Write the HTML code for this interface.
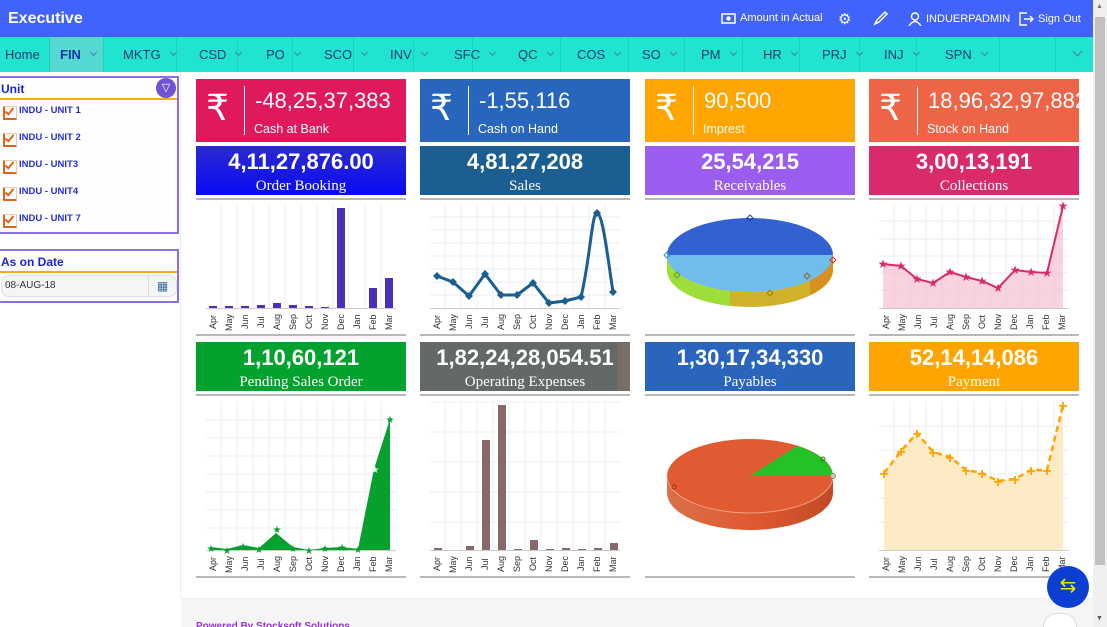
<!DOCTYPE html>
<html><head><meta charset="utf-8">
<style>
*{box-sizing:border-box;margin:0;padding:0}
html,body{width:1107px;height:627px;overflow:hidden}
body{font-family:"Liberation Sans",sans-serif;background:#fff;position:relative}
.hdr{position:absolute;left:0;top:0;width:1093px;height:37px;background:#4263fb;color:#fff}
.hdr .t{position:absolute;left:8px;top:10px;font-size:16px;font-weight:bold}
.hdr .r{position:absolute;top:12px;font-size:11px;display:flex;align-items:center;gap:4px}
.nav{position:absolute;left:0;top:37px;width:1093px;height:35px;background:#20e3d0}
.nav div{position:absolute;top:0;height:35px;line-height:35px;font-size:13px;color:#1d3b72;border-right:1px solid #1fd0c2;padding-left:10px;white-space:nowrap}
.nav i{display:inline-block;width:5px;height:5px;border-right:1px solid #4a7ab0;border-bottom:1px solid #4a7ab0;transform:rotate(45deg);margin-left:10px;vertical-align:4px}
.side{position:absolute;left:0;top:72px;width:181px;height:526px;border-right:1px solid #eee}
.box{position:absolute;left:0;width:179px;border:2px solid #8a6fe6;border-left:none;background:#fdfdfd}
.box .h{height:22px;border-bottom:2px solid #f7a81b;color:#1b25d8;font-weight:bold;font-size:12px;padding:4px 0 0 1px}
.it{height:27px;font-size:9.5px;font-weight:bold;color:#2530d8;padding-left:19px;position:relative;line-height:20px}
.it:before{content:"";position:absolute;left:3px;top:5px;width:11px;height:11px;border:1px solid #f2c9a8;border-left:2px solid #e0641c;border-bottom:2px solid #e0641c;border-radius:1px}
.it:after{content:"";position:absolute;left:7px;top:5px;width:3px;height:7px;border-right:2px solid #e0641c;border-bottom:2px solid #e0641c;transform:rotate(40deg)}
.card{position:absolute;width:210px;color:#fff}
.tc{height:63px;top:79px}
.tc .ic{position:absolute;left:10px;top:8px;font-size:36px}
.tc .ln{position:absolute;left:48px;top:7px;width:1px;height:49px;background:#fff}
.tc .n{position:absolute;left:59px;top:9px;font-size:22px}
.tc .l{position:absolute;left:58px;top:43px;font-size:12.5px}
.hc{height:49px;text-align:center}
.hc .n{font-size:22px;font-weight:bold;padding-top:3px;line-height:26px}
.hc .l{font-family:"Liberation Serif",serif;font-size:15px;line-height:22px}
.ch{position:absolute;width:210px;border-top:2px solid #b8b8b8;border-bottom:2px solid #b8b8b8}
.mo{position:absolute;left:9px;width:192px;display:flex;font-size:9px;color:#333}
.mo span{flex:1;writing-mode:vertical-rl;transform:rotate(180deg);text-align:right;display:flex;justify-content:center;align-items:center}
svg{position:absolute;left:0;top:0}
</style></head><body>
<div class="hdr"><div class="t">Executive</div>
<div class="r" style="left:721px"><svg style="position:static" width="15" height="11"><rect x="1" y="1" width="13" height="9" fill="none" stroke="#fff" stroke-width="1.5"/><circle cx="7.5" cy="5.5" r="2.2" fill="#fff"/></svg>Amount in Actual</div>
<div class="r" style="left:838px;top:10px;font-size:15px">⚙</div>
<div class="r" style="left:873px;top:10px"><svg style="position:static" width="16" height="16"><path d="M2 14 L4 10 L12 2 L14 4 L6 12 Z" fill="none" stroke="#fff" stroke-width="1.5"/></svg></div>
<div class="r" style="left:908px"><svg style="position:static" width="14" height="14"><circle cx="7" cy="4.5" r="3.5" fill="none" stroke="#fff" stroke-width="1.4"/><path d="M1 14 Q7 5 13 14" fill="none" stroke="#fff" stroke-width="1.4"/></svg>INDUERPADMIN</div>
<div class="r" style="left:1019px"><svg style="position:static" width="15" height="14"><path d="M8 1H1V13H8M5 7H14M11 4L14 7L11 10" fill="none" stroke="#fff" stroke-width="1.4"/></svg>Sign Out</div>
</div>
<div class="nav">
<div style="left:0;width:50px;padding-left:5px">Home</div>
<div style="left:50px;width:54px;background:#55d8d2;color:#1533a8;font-weight:bold">FIN<i></i></div>
<div style="left:104px;width:73px;padding-left:19px">MKTG<i></i></div>
<div style="left:177px;width:61px;padding-left:22px">CSD<i></i></div>
<div style="left:238px;width:55px;padding-left:28px">PO<i></i></div>
<div style="left:293px;width:61px;padding-left:31px">SCO<i></i></div>
<div style="left:354px;width:60px;padding-left:36px">INV<i></i></div>
<div style="left:414px;width:59px;padding-left:40px">SFC<i></i></div>
<div style="left:473px;width:88px;padding-left:45px">QC<i></i></div>
<div style="left:561px;width:68px;padding-left:16px">COS<i></i></div>
<div style="left:629px;width:56px;padding-left:13px">SO<i></i></div>
<div style="left:685px;width:58px;padding-left:16px">PM<i></i></div>
<div style="left:743px;width:57px;padding-left:20px">HR<i></i></div>
<div style="left:800px;width:60px;padding-left:22px">PRJ<i></i></div>
<div style="left:860px;width:57px;padding-left:24px">INJ<i></i></div>
<div style="left:917px;width:83px;padding-left:28px">SPN<i></i></div>
<div style="left:1000px;width:56px"></div>
<div style="left:1064px;border:none;padding:0"><i style="width:7px;height:7px"></i></div>
</div>
<div class="side">
<div class="box" style="top:4px;height:158px"><div class="h">Unit</div>
<div style="position:absolute;left:156px;top:0;width:20px;height:20px;border-radius:50%;background:#6f52d6;color:#fff;font-size:11px;text-align:center;line-height:20px">▽</div>
<div class="it" style="margin-top:1px">INDU - UNIT 1</div><div class="it">INDU - UNIT 2</div><div class="it">INDU - UNIT3</div><div class="it">INDU - UNIT4</div><div class="it">INDU - UNIT 7</div></div>
<div class="box" style="top:177px;height:54px"><div class="h">As on Date</div>
<div style="margin:2px 0 0 1px;height:22px;border:1px solid #ddd;border-radius:8px;background:#f5f5f5;font-size:10px;line-height:20px;padding-left:3px;color:#333;position:relative">08-AUG-18<div style="position:absolute;right:0;top:0;width:28px;height:20px;border-left:1px solid #ddd;color:#3a6aa0;text-align:center;font-size:12px">▦</div></div></div>
</div>

<div class="card tc" style="left:196px;background:#e0185e"><div class="ic">₹</div><div class="ln"></div><div class="n">-48,25,37,383</div><div class="l">Cash at Bank</div></div>
<div class="card tc" style="left:420px;background:#2865bd"><div class="ic">₹</div><div class="ln"></div><div class="n">-1,55,116</div><div class="l">Cash on Hand</div></div>
<div class="card tc" style="left:645px;background:#ffa500"><div class="ic">₹</div><div class="ln"></div><div class="n">90,500</div><div class="l">Imprest</div></div>
<div class="card tc" style="left:869px;background:#ee6446;overflow:hidden"><div class="ic">₹</div><div class="ln"></div><div class="n" style="white-space:nowrap">18,96,32,97,882</div><div class="l">Stock on Hand</div></div>

<div class="card hc" style="left:196px;top:146px;background:linear-gradient(#2a2ad0,#0a0af5)"><div class="n">4,11,27,876.00</div><div class="l">Order Booking</div></div>
<div class="card hc" style="left:420px;top:146px;background:#1b5e91"><div class="n">4,81,27,208</div><div class="l">Sales</div></div>
<div class="card hc" style="left:645px;top:146px;background:#9b5cf0"><div class="n">25,54,215</div><div class="l">Receivables</div></div>
<div class="card hc" style="left:869px;top:146px;background:#d92b6c"><div class="n">3,00,13,191</div><div class="l">Collections</div></div>

<div class="ch" style="left:196px;top:198px;height:138px"><svg width="210" height="134">
<g stroke="#e8ecf3"><path d="M25 4V108M41 4V108M57 4V108M73 4V108M89 4V108M105 4V108M121 4V108M137 4V108M153 4V108M169 4V108M185 4V108"/></g>
<path d="M10 108.5H200" stroke="#ccc"/>
<g fill="#4b30bb"><rect x="13" y="106" width="8" height="2"/><rect x="29" y="106" width="8" height="2"/><rect x="45" y="106" width="8" height="2"/><rect x="61" y="105" width="8" height="3"/><rect x="77" y="103" width="8" height="5"/><rect x="93" y="105" width="8" height="3"/><rect x="109" y="106" width="8" height="2"/><rect x="125" y="107" width="8" height="1"/><rect x="141" y="8" width="8" height="100"/><rect x="173" y="88" width="8" height="20"/><rect x="189" y="78" width="8" height="30"/></g></svg>
<div class="mo" style="top:110px;height:24px"><span>Apr</span><span>May</span><span>Jun</span><span>Jul</span><span>Aug</span><span>Sep</span><span>Oct</span><span>Nov</span><span>Dec</span><span>Jan</span><span>Feb</span><span>Mar</span></div></div>

<div class="ch" style="left:420px;top:198px;height:138px"><svg width="210" height="134">
<g stroke="#e8ecf3"><path d="M25 4V108M41 4V108M57 4V108M73 4V108M89 4V108M105 4V108M121 4V108M137 4V108M153 4V108M169 4V108M185 4V108M10 17H200M10 30H200M10 43H200M10 56H200M10 69H200M10 82H200M10 95H200"/></g>
<path d="M10 108.5H200" stroke="#ccc"/>
<path d="M17 76 L33 82 L49 96 L65 74 L81 95 L97 95 L113 83 L129 103 L145 101 L161 97 C170 60 172 12 177 13 C183 14 188 60 193 92" fill="none" stroke="#1b5e91" stroke-width="3"/>
<g fill="#1b5e91"><path d="M17 72l4 4-4 4-4-4zM33 78l4 4-4 4-4-4zM49 92l4 4-4 4-4-4zM65 70l4 4-4 4-4-4zM81 91l4 4-4 4-4-4zM97 91l4 4-4 4-4-4zM113 79l4 4-4 4-4-4zM129 99l4 4-4 4-4-4zM145 97l4 4-4 4-4-4zM161 93l4 4-4 4-4-4zM177 9l4 4-4 4-4-4zM193 88l4 4-4 4-4-4z"/></g></svg>
<div class="mo" style="top:110px;height:24px"><span>Apr</span><span>May</span><span>Jun</span><span>Jul</span><span>Aug</span><span>Sep</span><span>Oct</span><span>Nov</span><span>Dec</span><span>Jan</span><span>Feb</span><span>Mar</span></div></div>

<div class="ch" style="left:645px;top:198px;height:138px"><svg width="210" height="134">
<path d="M22 55 A83 37 0 0 0 188 55 L188 70 A83 37 0 0 1 22 70Z" fill="#cfb22a"/>
<path d="M22 55 L22 70 A83 37 0 0 0 85 106 L85 91 A83 37 0 0 1 22 55Z" fill="#9ede3a"/>
<path d="M165 80 L165 95 A83 37 0 0 0 188 70 L188 55 A83 37 0 0 1 165 80Z" fill="#d8901e"/>
<path d="M22 55 A83 37 0 0 1 188 55Z" fill="#3461d1"/>
<path d="M22 55 A83 37 0 0 0 188 55Z" fill="#70bcec"/>
<g fill="none" stroke-width="1"><path d="M105 15l3 3-3 3-3-3z" stroke="#1d40a0"/><path d="M22 52l3 3-3 3-3-3z" stroke="#2a90c0"/><path d="M188 57l3 3-3 3-3-3z" stroke="#d03020"/><path d="M32 72l3 3-3 3-3-3z" stroke="#6a9a20"/><path d="M125 90l3 3-3 3-3-3z" stroke="#a08010"/><path d="M162 73l3 3-3 3-3-3z" stroke="#a06010"/></g></svg></div>

<div class="ch" style="left:869px;top:198px;height:138px"><svg width="210" height="134">
<g stroke="#e8ecf3"><path d="M25 4V108M41 4V108M57 4V108M73 4V108M89 4V108M105 4V108M121 4V108M137 4V108M153 4V108M169 4V108M185 4V108M10 21H200M10 39H200M10 56H200M10 73H200M10 90H200"/></g>
<path d="M14 64 L32 66 L48 79 L64 83 L81 72 L97 77 L113 81 L129 88 L146 70 L162 72 L178 73 L194 6 L194 108 L14 108Z" fill="#f3b5c8" opacity=".6"/>
<path d="M10 108.5H200" stroke="#ccc"/>
<path d="M14 64 L32 66 L48 79 L64 83 L81 72 L97 77 L113 81 L129 88 L146 70 L162 72 L178 73 L194 6" fill="none" stroke="#d92b6c" stroke-width="2"/>
<g fill="#d92b6c" font-size="12" text-anchor="middle"><text x="14" y="68">★</text><text x="32" y="70">★</text><text x="48" y="83">★</text><text x="64" y="87">★</text><text x="81" y="76">★</text><text x="97" y="81">★</text><text x="113" y="85">★</text><text x="129" y="92">★</text><text x="146" y="74">★</text><text x="162" y="76">★</text><text x="178" y="77">★</text><text x="194" y="10">★</text></g></svg>
<div class="mo" style="top:110px;height:24px"><span>Apr</span><span>May</span><span>Jun</span><span>Jul</span><span>Aug</span><span>Sep</span><span>Oct</span><span>Nov</span><span>Dec</span><span>Jan</span><span>Feb</span><span>Mar</span></div></div>

<div class="card hc" style="left:196px;top:342px;background:#03a22e"><div class="n">1,10,60,121</div><div class="l">Pending Sales Order</div></div>
<div class="card hc" style="left:420px;top:342px;background:linear-gradient(90deg,#636965 94%,#7a6c68 94%)"><div class="n">1,82,24,28,054.51</div><div class="l">Operating Expenses</div></div>
<div class="card hc" style="left:645px;top:342px;background:#2964bd"><div class="n">1,30,17,34,330</div><div class="l">Payables</div></div>
<div class="card hc" style="left:869px;top:342px;background:#ffa400"><div class="n">52,14,14,086</div><div class="l">Payment</div></div>

<div class="ch" style="left:196px;top:394px;height:184px"><svg width="210" height="180">
<g stroke="#e8ecf3"><path d="M25 6V154M41 6V154M57 6V154M73 6V154M89 6V154M105 6V154M121 6V154M137 6V154M153 6V154M169 6V154M185 6V154M10 24H200M10 42H200M10 60H200M10 78H200M10 96H200M10 114H200M10 132H200"/></g>
<path d="M15 151 L31 153 L47 149 L63 152 L80 137 L97 151 L113 154 L129 152 L146 151 L162 153 L178 73 L194 23 L194 154 L15 154Z" fill="#07a02e"/>
<path d="M10 154.5H200" stroke="#ccc"/>
<g fill="#07a02e" font-size="10" text-anchor="middle"><text x="15" y="156">★</text><text x="31" y="158">★</text><text x="47" y="154">★</text><text x="63" y="157">★</text><text x="81" y="137">★</text><text x="97" y="156">★</text><text x="113" y="158">★</text><text x="129" y="156">★</text><text x="146" y="155">★</text><text x="162" y="157">★</text><text x="179" y="77" fill="#dff5e0">★</text><text x="194" y="27">★</text></g></svg>
<div class="mo" style="top:156px;height:24px"><span>Apr</span><span>May</span><span>Jun</span><span>Jul</span><span>Aug</span><span>Sep</span><span>Oct</span><span>Nov</span><span>Dec</span><span>Jan</span><span>Feb</span><span>Mar</span></div></div>

<div class="ch" style="left:420px;top:394px;height:184px"><svg width="210" height="180">
<g stroke="#e8ecf3"><path d="M25 6V154M41 6V154M57 6V154M73 6V154M89 6V154M105 6V154M121 6V154M137 6V154M153 6V154M169 6V154M185 6V154M10 6H200M10 36H200M10 66H200M10 96H200M10 126H200"/></g>
<path d="M10 154.5H200" stroke="#ccc"/>
<g fill="#87696a"><rect x="14" y="152" width="8" height="2"/><rect x="46" y="150" width="8" height="4"/><rect x="62" y="44" width="8" height="110"/><rect x="78" y="9" width="8" height="145"/><rect x="94" y="153" width="8" height="1"/><rect x="110" y="144" width="8" height="10"/><rect x="126" y="153" width="8" height="1"/><rect x="142" y="152" width="8" height="2"/><rect x="158" y="153" width="8" height="1"/><rect x="174" y="152" width="8" height="2"/><rect x="190" y="147" width="8" height="7"/></g></svg>
<div class="mo" style="top:156px;height:24px"><span>Apr</span><span>May</span><span>Jun</span><span>Jul</span><span>Aug</span><span>Sep</span><span>Oct</span><span>Nov</span><span>Dec</span><span>Jan</span><span>Feb</span><span>Mar</span></div></div>

<div class="ch" style="left:645px;top:394px;height:184px"><svg width="210" height="180">
<defs><linearGradient id="sd" x1="0" x2="1"><stop offset="0" stop-color="#d9704a"/><stop offset=".5" stop-color="#e05a30"/><stop offset="1" stop-color="#c24a26"/></linearGradient></defs>
<path d="M22 80 A83 37 0 0 0 188 80 L188 97 A83 37 0 0 1 22 97Z" fill="url(#sd)"/>
<ellipse cx="105" cy="80" rx="83" ry="37" fill="#e05b32"/>
<path d="M22 80 A83 37 0 0 0 188 80" fill="none" stroke="#f0a080" stroke-width="1"/>
<path d="M105 80 L152 50 A83 37 0 0 1 188 80Z" fill="#25c128"/>
<circle cx="29" cy="91" r="2" fill="none" stroke="#a03010"/><circle cx="178" cy="63" r="2" fill="none" stroke="#208020"/><circle cx="188" cy="80" r="2.5" fill="#ccb" stroke="#887"/></svg></div>

<div class="ch" style="left:869px;top:394px;height:184px"><svg width="210" height="180">
<g stroke="#e8ecf3"><path d="M25 6V154M41 6V154M57 6V154M73 6V154M89 6V154M105 6V154M121 6V154M137 6V154M153 6V154M169 6V154M185 6V154M10 30H200M10 54H200M10 78H200M10 102H200M10 126H200"/></g>
<path d="M15 77 L32 55 L48 37 L64 56 L81 61 L97 74 L113 77 L129 85 L146 83 L162 74 L178 74 L194 9 L194 154 L15 154Z" fill="#fde6b8" opacity=".8"/>
<path d="M10 154.5H200" stroke="#ccc"/>
<path d="M15 77 L32 55 L48 37 L64 56 L81 61 L97 74 L113 77 L129 85 L146 83 L162 74 L178 74 L194 9" fill="none" stroke="#ffa400" stroke-width="2.5" stroke-dasharray="6 4"/>
<g fill="#ffa400" font-size="16" font-weight="bold" text-anchor="middle"><text x="15" y="83">+</text><text x="32" y="61">+</text><text x="48" y="43">+</text><text x="64" y="62">+</text><text x="81" y="67">+</text><text x="97" y="80">+</text><text x="113" y="83">+</text><text x="129" y="91">+</text><text x="146" y="89">+</text><text x="162" y="80">+</text><text x="178" y="80">+</text><text x="194" y="15">+</text></g></svg>
<div class="mo" style="top:156px;height:24px"><span>Apr</span><span>May</span><span>Jun</span><span>Jul</span><span>Aug</span><span>Sep</span><span>Oct</span><span>Nov</span><span>Dec</span><span>Jan</span><span>Feb</span><span>Mar</span></div></div>

<div style="position:absolute;left:181px;top:598px;width:912px;height:29px;background:#f5f5f5;border-top:1px solid #eee"></div>
<div style="position:absolute;left:196px;top:621px;font-size:10px;color:#9a30e0;font-weight:bold">Powered By Stocksoft Solutions</div>
<div style="position:absolute;left:1043px;top:613px;width:34px;height:14px;border-radius:17px 17px 0 0;background:#fff;border:1px solid #ddd;border-bottom:none"></div>
<div style="position:absolute;left:1047px;top:566px;width:42px;height:42px;border-radius:50%;background:#0b3fd1;color:#f5e400;font-size:20px;text-align:center;line-height:40px">⇆</div>
<div style="position:absolute;left:1093px;top:0;width:14px;height:627px;background:#f0f0f0"></div>
<div style="position:absolute;left:1095px;top:17px;width:10px;height:548px;background:#c1c1c1"></div>
<div style="position:absolute;left:1096px;top:3px;font-size:7px;color:#777">▲</div>
<div style="position:absolute;left:1096px;top:615px;font-size:7px;color:#555">▼</div>
</body></html>
